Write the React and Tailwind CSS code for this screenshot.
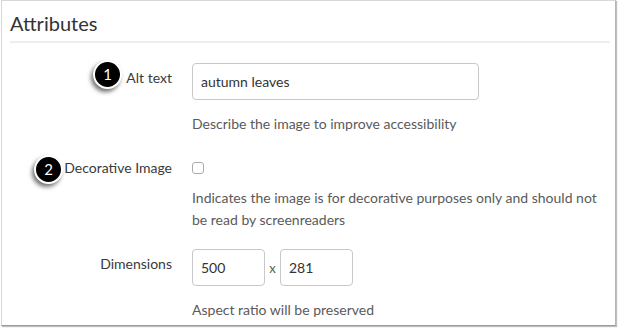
import React from 'react';

const Badge = ({ n, className }) => (
  <div
    className={`absolute flex items-center justify-center w-[29px] h-[29px] rounded-full bg-black border-2 border-white text-white text-[15px] leading-none shadow-[-2px_3px_4px_rgba(0,0,0,0.55)] ${className}`}
  >
    {n}
  </div>
);

const Row = ({ label, children, labelClass = 'pt-[4px]' }) => (
  <div className="grid grid-cols-[170px_1fr] gap-x-[20px]">
    <div className={`text-right text-[#3a3a3a] ${labelClass}`}>{label}</div>
    <div>{children}</div>
  </div>
);

export default function App() {
  return (
    <div className="w-[618px] h-[329px] bg-white font-['Lato',sans-serif] text-[14px] leading-[22px]">
      <div className="relative ml-px w-[615px] h-[326px] border border-[#d8d8d8] border-r-[#b5b5b5] border-b-[#9a9a9a] shadow-[1px_1px_1px_rgba(0,0,0,0.25)]">
        <div className="pl-[8px] pr-[5px]">
          <h2 className="pt-[9px] pb-[5px] text-[20px] leading-[26px] text-[#333] border-b-2 border-[#eeeeee]">
            Attributes
          </h2>
        </div>

        <div className="pt-[20px]">
          <Row label="Alt text">
            <input
              readOnly
              value="autumn leaves"
              className="w-[287px] h-[37px] px-[8px] border border-[#c8c8c8] rounded-[4px] text-[#333] outline-none"
            />
            <p className="mt-[13px] text-[#5a5a5a]">Describe the image to improve accessibility</p>
          </Row>

          <div className="mt-[22px]">
            <Row label="Decorative Image" labelClass="">
              <div className="h-[22px] flex items-center">
                <span className="block w-[12px] h-[12px] rounded-[3px] border border-[#aaa] bg-white" />
              </div>
              <p className="mt-[8px] pr-[10px] text-[#5a5a5a]">
                Indicates the image is for decorative purposes only and should not be read by screenreaders
              </p>
            </Row>
          </div>

          <div className="mt-[18px]">
            <Row label="Dimensions">
              <div className="flex items-center">
                <input
                  readOnly
                  value="500"
                  className="w-[73px] h-[37px] px-[8px] border border-[#c8c8c8] rounded-[4px] text-[#333] outline-none"
                />
                <span className="w-[15px] text-center text-[13px] text-[#5a5a5a]">x</span>
                <input
                  readOnly
                  value="281"
                  className="w-[73px] h-[37px] px-[8px] border border-[#c8c8c8] rounded-[4px] text-[#333] outline-none"
                />
              </div>
              <p className="mt-[13px] text-[#5a5a5a]">Aspect ratio will be preserved</p>
            </Row>
          </div>
        </div>

        <Badge n="1" className="left-[91px] top-[59px]" />
        <Badge n="2" className="left-[32px] top-[154px]" />
      </div>
    </div>
  );
}
